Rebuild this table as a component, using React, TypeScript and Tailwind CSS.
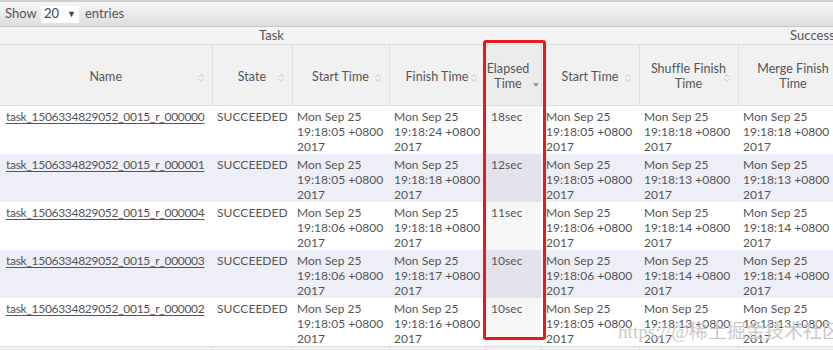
import React from "react";

const ROWS = [
  { id: "000000", start: "19:18:05", finish: "19:18:24", elapsed: "18sec", aStart: "19:18:05", shuffle: "19:18:18", merge: "19:18:18" },
  { id: "000001", start: "19:18:05", finish: "19:18:18", elapsed: "12sec", aStart: "19:18:05", shuffle: "19:18:13", merge: "19:18:13" },
  { id: "000004", start: "19:18:06", finish: "19:18:18", elapsed: "11sec", aStart: "19:18:06", shuffle: "19:18:14", merge: "19:18:14" },
  { id: "000003", start: "19:18:06", finish: "19:18:17", elapsed: "10sec", aStart: "19:18:06", shuffle: "19:18:14", merge: "19:18:14" },
  { id: "000002", start: "19:18:05", finish: "19:18:16", elapsed: "10sec", aStart: "19:18:05", shuffle: "19:18:13", merge: "19:18:13" },
];

const WIDTHS = [212, 80, 97, 96, 56, 98, 99, 110];

function SortIcon({ down }: { down?: boolean }) {
  if (down) {
    return (
      <svg width="6" height="4" viewBox="0 0 6 4" className="inline-block">
        <path d="M0 0 L6 0 L3 4 Z" fill="#9a9a9a" />
      </svg>
    );
  }
  return (
    <svg width="6" height="9" viewBox="0 0 6 9" className="inline-block">
      <path d="M0.5 3.5 L3 1 L5.5 3.5" fill="none" stroke="#c4c4c4" strokeWidth="1" />
      <path d="M0.5 5.5 L3 8 L5.5 5.5" fill="none" stroke="#c4c4c4" strokeWidth="1" />
    </svg>
  );
}

function DateCell({ time }: { time: string }) {
  return (
    <div className="whitespace-nowrap">
      <div>Mon Sep 25</div>
      <div>{time} +0800</div>
      <div>2017</div>
    </div>
  );
}

export default function App() {
  const headers: { label: React.ReactNode; down?: boolean }[] = [
    { label: "Name" },
    { label: "State" },
    { label: "Start Time" },
    { label: "Finish Time" },
    { label: <>Elapsed<br />Time</>, down: true },
    { label: "Start Time" },
    { label: <>Shuffle Finish<br />Time</> },
    { label: <>Merge Finish<br />Time</> },
  ];

  return (
    <div
      className="relative h-[350px] w-[833px] overflow-hidden bg-white text-[12px] tracking-[0.05px] text-[#555]"
      style={{ fontFamily: 'Lato, "Noto Sans", sans-serif' }}
    >
      {/* top bar */}
      <div className="flex h-[27px] items-center gap-1 border-t-2 border-b border-t-[#cfcfcf] border-b-[#c8c8c8] bg-gradient-to-b from-[#f6f6f6] to-[#dedede] pl-[5px] text-[13px]">
        <span>Show</span>
        <span className="flex h-[17px] w-[38px] items-center justify-between bg-white px-[3px] text-[#444]">
          <span>20</span>
          <span className="text-[9px]">▼</span>
        </span>
        <span className="ml-[2px]">entries</span>
      </div>

      {/* group header */}
      <div className="flex h-[18px] items-center border-b border-[#dcdcdc] bg-[#f4f4f4] text-[13px]">
        <div className="w-[292px] shrink-0 pr-[8px] text-right">Task</div>
        <div className="shrink-0 whitespace-nowrap pl-[498px]">Successful Attempt</div>
      </div>

      <table className="table-fixed border-collapse" style={{ width: WIDTHS.reduce((a, b) => a + b, 0) }}>
        <colgroup>
          {WIDTHS.map((w, i) => (
            <col key={i} style={{ width: w }} />
          ))}
        </colgroup>
        <thead>
          <tr className="h-[60px] bg-[#f1f1f1] text-[12.5px]">
            {headers.map((h, i) => (
              <th
                key={i}
                className={`border-r border-b border-[#dedede] px-[4px] pt-[3px] font-normal leading-[15px] ${i === 4 ? "bg-[#ececec]" : ""}`}
              >
                <div className="relative flex items-center justify-center">
                  <span className="whitespace-nowrap text-center">{h.label}</span>
                  <span className={h.down ? "ml-[4px] mt-[14px]" : "absolute right-[4px] top-1/2 -translate-y-1/2"}>
                    <SortIcon down={h.down} />
                  </span>
                </div>
              </th>
            ))}
          </tr>
        </thead>
        <tbody>
          {ROWS.map((r, i) => {
            const even = i % 2 === 1;
            return (
              <tr key={r.id} className={`h-[47px] align-top leading-[15px] ${even ? "bg-[#eeeef6]" : "bg-white"}`}>
                <td className="whitespace-nowrap px-[6px] pt-[3px]">
                  <span className="tracking-[-0.3px] underline underline-offset-2">task_1506334829052_0015_r_{r.id}</span>
                </td>
                <td className="px-[5px] pt-[3px]">SUCCEEDED</td>
                <td className="px-[5px] pt-[3px]"><DateCell time={r.start} /></td>
                <td className="px-[5px] pt-[3px]"><DateCell time={r.finish} /></td>
                <td className={`px-[6px] pt-[3px] ${even ? "bg-[#e3e3ee]" : "bg-[#f7f7f7]"}`}>{r.elapsed}</td>
                <td className="px-[5px] pt-[3px]"><DateCell time={r.aStart} /></td>
                <td className="px-[5px] pt-[3px]"><DateCell time={r.shuffle} /></td>
                <td className="px-[5px] pt-[3px]"><DateCell time={r.merge} /></td>
              </tr>
            );
          })}
          <tr className="h-[10px] bg-[#efefef]">
            {WIDTHS.map((_, i) => (
              <td key={i} className="border-t border-r border-[#dedede]" />
            ))}
          </tr>
        </tbody>
      </table>

      {/* highlight box */}
      <div className="pointer-events-none absolute left-[483px] top-[40px] h-[300px] w-[63px] rounded-[3px] border-[3px] border-[#e8191b]" />

      {/* watermark */}
      <div
        className="pointer-events-none absolute left-[618px] top-[318px] whitespace-nowrap text-[19px] text-[#c9c9c9]"
        style={{ fontFamily: '"Liberation Serif", "Noto Sans CJK SC", serif' }}
      >
        https://@稀土掘金技术社区
      </div>
    </div>
  );
}
